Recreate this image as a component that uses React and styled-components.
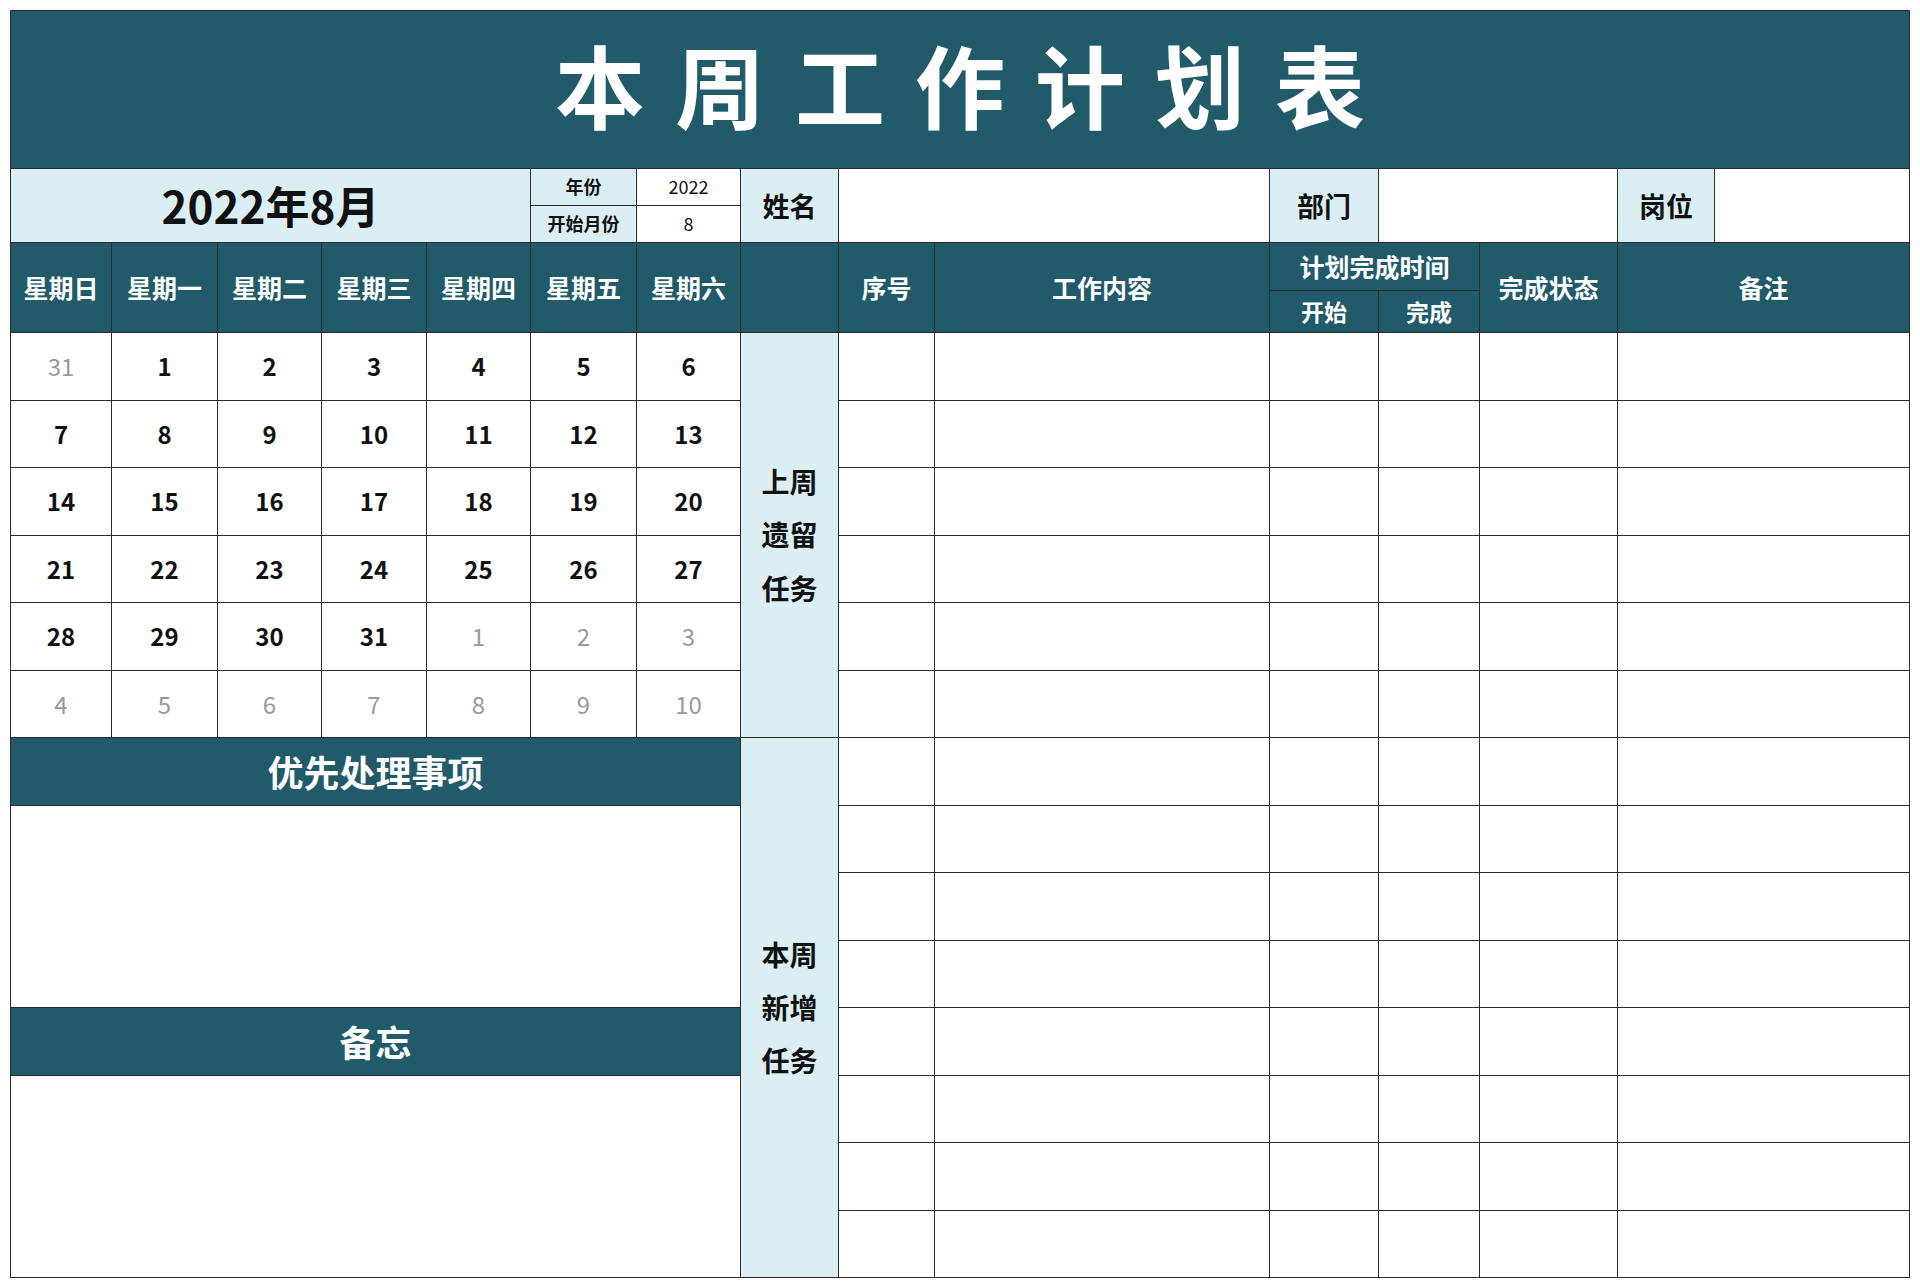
import React from "react";
import styled, { createGlobalStyle } from "styled-components";

const Global = createGlobalStyle`
  html, body { margin: 0; padding: 0; background: #fff; }
  body { font-family: "Noto Sans CJK SC", "Noto Sans", sans-serif; }
`;

const DARK = "#215a69";
const LIGHT = "#dbeef3";

const Sheet = styled.div`
  margin: 10px;
  width: 1900px;
  display: grid;
  grid-template-columns: 100px 105px 103px 104px 103px 105px 103px 97px 95px 334px 108px 100px 137px 96px 194px;
  grid-template-rows: 157px 36px 36px 47px 41px repeat(14, 66.5px);
  gap: 1px;
  padding: 1px;
  background: #2b2b2b;
  box-sizing: border-box;
`;

const Cell = styled.div`
  grid-column: ${(p) => p.$c};
  grid-row: ${(p) => p.$r};
  background: ${(p) => (p.$tone === "dark" ? DARK : p.$tone === "light" ? LIGHT : "#fff")};
  color: ${(p) => (p.$tone === "dark" ? "#fff" : p.$muted ? "#9a9a9a" : "#111")};
  font-size: ${(p) => p.$size || 24}px;
  font-weight: ${(p) => (p.$bold ? 700 : 400)};
  display: flex;
  align-items: center;
  justify-content: center;
  text-align: center;
  line-height: 1.4;
`;

const Title = styled(Cell)`
  font-size: 90px;
  font-weight: 700;
  letter-spacing: 30px;
  padding-left: 30px;
  padding-bottom: 14px;
`;

const Vertical = styled.div`
  width: 2.1em;
  line-height: 1.9;
`;

const days = [];
days.push({ d: 31, m: true });
for (let i = 1; i <= 31; i++) days.push({ d: i });
for (let i = 1; i <= 10; i++) days.push({ d: i, m: true });

const weekdays = ["星期日", "星期一", "星期二", "星期三", "星期四", "星期五", "星期六"];

export default function App() {
  return (
    <>
      <Global />
      <Sheet>
        <Title $c="1 / 16" $r="1" $tone="dark">本周工作计划表</Title>

        <Cell $c="1 / 6" $r="2 / 4" $tone="light" $size={44} $bold>2022年8月</Cell>
        <Cell $c="6" $r="2" $tone="light" $size={18} $bold>年份</Cell>
        <Cell $c="7" $r="2" $size={18}>2022</Cell>
        <Cell $c="6" $r="3" $tone="light" $size={18} $bold>开始月份</Cell>
        <Cell $c="7" $r="3" $size={18}>8</Cell>
        <Cell $c="8" $r="2 / 4" $tone="light" $size={27} $bold>姓名</Cell>
        <Cell $c="9 / 11" $r="2 / 4" />
        <Cell $c="11" $r="2 / 4" $tone="light" $size={27} $bold>部门</Cell>
        <Cell $c="12 / 14" $r="2 / 4" />
        <Cell $c="14" $r="2 / 4" $tone="light" $size={27} $bold>岗位</Cell>
        <Cell $c="15" $r="2 / 4" />

        {weekdays.map((w, i) => (
          <Cell key={w} $c={`${i + 1}`} $r="4 / 6" $tone="dark" $size={25} $bold>{w}</Cell>
        ))}
        <Cell $c="8" $r="4 / 6" $tone="dark" />
        <Cell $c="9" $r="4 / 6" $tone="dark" $size={25} $bold>序号</Cell>
        <Cell $c="10" $r="4 / 6" $tone="dark" $size={25} $bold>工作内容</Cell>
        <Cell $c="11 / 13" $r="4" $tone="dark" $size={25} $bold>计划完成时间</Cell>
        <Cell $c="11" $r="5" $tone="dark" $size={23} $bold>开始</Cell>
        <Cell $c="12" $r="5" $tone="dark" $size={23} $bold>完成</Cell>
        <Cell $c="13" $r="4 / 6" $tone="dark" $size={25} $bold>完成状态</Cell>
        <Cell $c="14 / 16" $r="4 / 6" $tone="dark" $size={25} $bold>备注</Cell>

        {days.map((x, i) => (
          <Cell
            key={i}
            $c={`${(i % 7) + 1}`}
            $r={`${6 + Math.floor(i / 7)}`}
            $muted={x.m}
            $bold={!x.m}
            $size={24}
          >
            {x.d}
          </Cell>
        ))}
        <Cell $c="1 / 8" $r="12" $tone="dark" $size={36} $bold>优先处理事项</Cell>
        <Cell $c="1 / 8" $r="13 / 16" />
        <Cell $c="1 / 8" $r="16" $tone="dark" $size={36} $bold>备忘</Cell>
        <Cell $c="1 / 8" $r="17 / 20" />

        <Cell $c="8" $r="6 / 12" $tone="light" $size={28} $bold><Vertical>上周遗留任务</Vertical></Cell>
        <Cell $c="8" $r="12 / 20" $tone="light" $size={28} $bold><Vertical>本周新增任务</Vertical></Cell>

        {Array.from({ length: 14 }).map((_, i) => (
          <React.Fragment key={i}>
            <Cell $c="9" $r={`${6 + i}`} />
            <Cell $c="10" $r={`${6 + i}`} />
            <Cell $c="11" $r={`${6 + i}`} />
            <Cell $c="12" $r={`${6 + i}`} />
            <Cell $c="13" $r={`${6 + i}`} />
            <Cell $c="14 / 16" $r={`${6 + i}`} />
          </React.Fragment>
        ))}
      </Sheet>
    </>
  );
}
